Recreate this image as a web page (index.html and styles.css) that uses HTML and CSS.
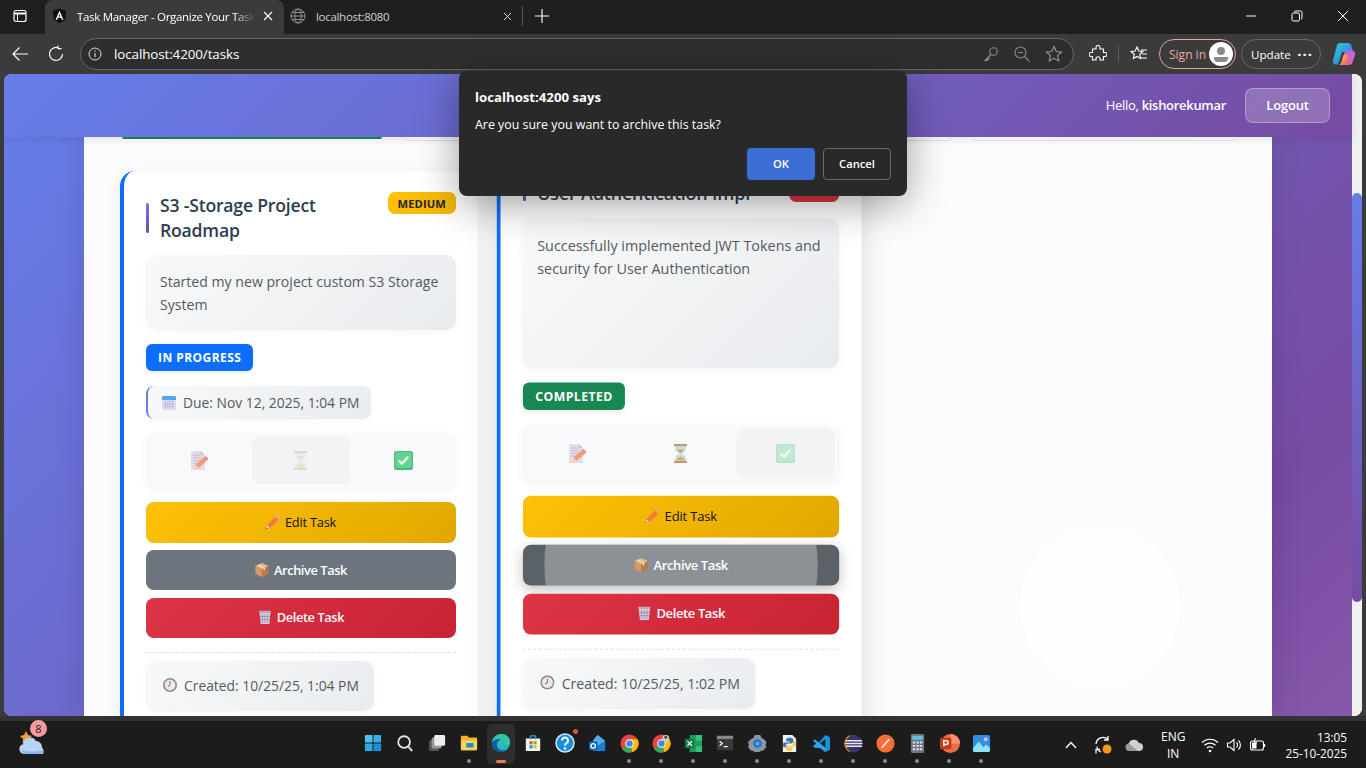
FILE: index.html
```html
<!DOCTYPE html>
<html lang="en">
<head>
<meta charset="utf-8">
<title>Task Manager - Organize Your Tasks</title>
<link rel="stylesheet" href="styles.css">
</head>
<body>
<svg class="defs" xmlns="http://www.w3.org/2000/svg">
  <defs>
    <symbol id="i-memo" viewBox="0 0 18 18">
      <path d="M2 0h9l4 4v14H2z" fill="#d9cfe3"/><path d="M11 0l4 4h-4z" fill="#b9adc8"/>
      <path d="M4 4h6M4 6.500h8M4 9h7M4 11.500h4" stroke="#a99bb8" stroke-width=".8"/>
      <path d="M5 17l1-4 8-7 3 3-8 7z" fill="#f4733d"/><path d="M14 6l1.500-1.300 3 3L17 9z" fill="#e8505b"/><path d="M5 17l1-4 3 3z" fill="#f8c9a0"/>
    </symbol>
    <symbol id="i-hour" viewBox="0 0 18 18">
      <path d="M4 2h10v3c0 2-3 3-3 4s3 2 3 4v3H4v-3c0-2 3-3 3-4s-3-2-3-4z" fill="#bfe3f5"/>
      <path d="M5.500 5h7c-.5 1.500-3 2.500-3.500 4-.5-1.500-3-2.500-3.500-4zM5 15c0-1.500 3-2.500 4-3.500 1 1 4 2 4 3.500z" fill="#eaa94a"/>
      <rect x="3" y="0" width="12" height="2.200" rx=".6" fill="#c99561"/><rect x="3" y="15.800" width="12" height="2.200" rx=".6" fill="#c99561"/>
    </symbol>
    <symbol id="i-check" viewBox="0 0 18 18">
      <rect x="0" y="0" width="18" height="18" rx="2" fill="#3eb56f"/><rect x="1" y="1" width="16" height="15" rx="1.500" fill="#55cf86"/>
      <path d="M4.500 9l3 3 6-6.500" fill="none" stroke="#fff" stroke-width="2"/>
    </symbol>
    <symbol id="i-cal" viewBox="0 0 14 14">
      <rect width="14" height="14" rx="1.500" fill="#e0d8ee"/><path d="M0 1.500A1.500 1.500 0 0 1 1.500 0h11A1.500 1.500 0 0 1 14 1.500V4H0z" fill="#4ea6ec"/>
      <path d="M2.500 6h9M2.500 8.300h9M2.500 10.600h9" stroke="#a8a0c8" stroke-width="1.200" stroke-dasharray="1.500 1"/>
    </symbol>
    <symbol id="i-pencil" viewBox="0 0 14 14">
      <path d="M0 14l1-4L9.500 1.500l3 3L4 13z" fill="#f5793f"/><path d="M9.500 1.500L11 0l3 3-1.500 1.500z" fill="#f0a0a8"/><path d="M0 14l1-4 3 3z" fill="#f8d2ac"/><path d="M0 14l.5-1.700 1.200 1.200z" fill="#444"/>
    </symbol>
    <symbol id="i-box" viewBox="0 0 14 14">
      <path d="M7 0l6.500 3v8L7 14 .5 11V3z" fill="#b5794a"/><path d="M.5 3L7 6v8L.5 11z" fill="#d49a66"/><path d="M7 0l6.500 3L7 6 .5 3z" fill="#e3b98e"/><path d="M3.500 1.500L10 4.500v2.500l-1.500.7V5.200L2 2.200z" fill="#f3dcc0"/>
    </symbol>
    <symbol id="i-trash" viewBox="0 0 14 14">
      <path d="M1.500 2.500h11l-1.200 11.500H2.700z" fill="#d5cfe0"/><rect x="1" y=".8" width="12" height="2" rx=".6" fill="#b6aec4"/>
      <path d="M4 4l.6 9M7 4v9M10 4l-.6 9M2.200 6.500h9.600M2.500 9.500h9" stroke="#8f86a4" stroke-width=".7" fill="none"/>
    </symbol>
    <symbol id="i-clock" viewBox="0 0 14 14">
      <circle cx="7" cy="7" r="7" fill="#8d8a90"/><circle cx="7" cy="7" r="5.400" fill="#ece9ee"/><path d="M7 7V3" stroke="#c0506a" stroke-width="1"/><path d="M7 7l-2 1.500" stroke="#666" stroke-width="1"/>
    </symbol>
  </defs>
</svg>

<div class="tabstrip">
  <button class="tb-btn side-toggle" aria-label="Tabs">
    <svg viewBox="0 0 16 16" width="16" height="16"><rect x="2" y="2.500" width="12" height="11" rx="2" fill="none" stroke="#fff" stroke-width="1.200"/><path d="M2.500 5.500h11" stroke="#fff" stroke-width="2"/><path d="M5.500 5v8" stroke="#fff" stroke-width="1"/></svg>
  </button>
  <div class="tab tab-active">
    <svg class="favicon" viewBox="0 0 16 16" width="15" height="16"><path d="M8 0L15 2.500l-1 9.500L8 16 2 12 1 2.500z" fill="#0f0f1a"/><path d="M8 2.500L3.800 12h1.600l.9-2.200h3.400l.9 2.200h1.600zM7 8.400l1-2.500 1 2.500z" fill="#fff"/></svg>
    <span class="tab-title">Task Manager - Organize Your Tasks</span>
    <svg class="tab-x" viewBox="0 0 10 10" width="10" height="10"><path d="M1 1l8 8M9 1l-8 8" stroke="#fff" stroke-width="1.100"/></svg>
  </div>
  <div class="tab tab-idle">
    <svg class="favicon" viewBox="0 0 16 16" width="16" height="16"><g fill="none" stroke="#8f8f8f" stroke-width="1"><circle cx="8" cy="8" r="7"/><ellipse cx="8" cy="8" rx="3.200" ry="7"/><path d="M1 8h14M2 4.500h12M2 11.500h12"/></g></svg>
    <span class="tab-title">localhost:8080</span>
    <svg class="tab-x" viewBox="0 0 10 10" width="9" height="9"><path d="M1 1l8 8M9 1l-8 8" stroke="#ddd" stroke-width="1.100"/></svg>
  </div>
  <span class="tab-sep"></span>
  <button class="tb-btn new-tab" aria-label="New tab">
    <svg viewBox="0 0 14 14" width="14" height="14"><path d="M7 0v14M0 7h14" stroke="#fff" stroke-width="1.100"/></svg>
  </button>
  <div class="win-controls">
    <svg viewBox="0 0 12 12" width="12" height="12"><path d="M1 6h10" stroke="#fff"/></svg>
    <svg viewBox="0 0 12 12" width="12" height="12"><rect x="1" y="3" width="7.500" height="8" rx="1.500" fill="none" stroke="#fff"/><path d="M3.500 2.500V2.200A1.200 1.200 0 0 1 4.700 1h4.800A1.500 1.500 0 0 1 11 2.500v5.300a1.200 1.200 0 0 1-1.200 1.200" fill="none" stroke="#fff"/></svg>
    <svg viewBox="0 0 12 12" width="12" height="12"><path d="M1 1l10 10M11 1L1 11" stroke="#fff"/></svg>
  </div>
</div>

<div class="toolbar">
  <button class="nav-btn" aria-label="Back"><svg viewBox="0 0 18 18" width="18" height="18"><path d="M17 9H2M8.500 2.500L2 9l6.500 6.500" fill="none" stroke="#fff" stroke-width="1.200"/></svg></button>
  <button class="nav-btn" aria-label="Refresh"><svg viewBox="0 0 18 18" width="18" height="18"><path d="M15.500 9A6.500 6.500 0 1 1 11.500 3M11 0.500v3.200h3.500" fill="none" stroke="#fff" stroke-width="1.200"/></svg></button>
  <div class="omnibox">
    <svg class="info" viewBox="0 0 14 14" width="14" height="14"><circle cx="7" cy="7" r="6" fill="none" stroke="#ddd"/><path d="M7 6v4.200M7 3.600v1.200" stroke="#ddd" stroke-width="1.100"/></svg>
    <span class="url">localhost:4200/tasks</span>
    <span class="omni-actions">
      <svg viewBox="0 0 16 16" width="16" height="16"><g fill="none" stroke="#8d8d8d" stroke-width="1.100"><circle cx="10.500" cy="5.500" r="3.800"/><path d="M8 8.500L2 14.500h2.500v-1.500h1.500v-1.500"/></g></svg>
      <svg viewBox="0 0 16 16" width="16" height="16"><g fill="none" stroke="#8d8d8d" stroke-width="1.100"><circle cx="6.500" cy="6.500" r="5.500"/><path d="M10.500 10.500l5 5M4 6.500h5"/></g></svg>
      <svg viewBox="0 0 18 18" width="18" height="18"><path d="M9 1.500l2.300 5 5.200.6-3.900 3.600 1.100 5.300L9 13.300 4.300 16l1.100-5.300L1.500 7.100l5.200-.6z" fill="none" stroke="#9a9a9a" stroke-width="1.100"/></svg>
    </span>
  </div>
  <div class="browser-actions">
    <svg class="ba-ext" viewBox="0 0 18 18" width="18" height="18"><path d="M7 2.500a2 2 0 0 1 4 0V4h3.500v3.500H16a2 2 0 0 1 0 4h-1.500V15H11v-1.200a2 2 0 0 0-4 0V15H3.500v-3.500H2a2 2 0 0 1 0-4h1.500V4H7z" fill="none" stroke="#fff" stroke-width="1.100"/></svg>
    <span class="ba-sep"></span>
    <svg class="ba-fav" viewBox="0 0 18 18" width="18" height="18"><path d="M7 2l1.800 4 4 .5-3 2.800.8 4.200L7 11.400l-3.600 2.100.8-4.200-3-2.800 4-.5zM11 5h6M12 9h5M11 13h6" fill="none" stroke="#fff" stroke-width="1.100"/></svg>
    <div class="signin">
      <span>Sign in</span>
      <span class="avatar"><svg viewBox="0 0 24 24" width="24" height="24"><circle cx="12" cy="12" r="12" fill="#fff"/><circle cx="12" cy="9" r="4" fill="#8a8a8a"/><path d="M5 15h14v1.500A4 4 0 0 1 15 20H9a4 4 0 0 1-4-3.500z" fill="#8a8a8a"/></svg></span>
    </div>
    <div class="update">
      <span>Update</span>
      <span class="dots">···</span>
    </div>
    <svg class="copilot" viewBox="0 0 24 24" width="24" height="24">
      <defs>
        <linearGradient id="cp1" x1="0" y1="0" x2="1" y2="1"><stop offset="0" stop-color="#30d0c8"/><stop offset=".6" stop-color="#2f8fe8"/><stop offset="1" stop-color="#3a5fd8"/></linearGradient>
        <linearGradient id="cp2" x1="0" y1="0" x2="1" y2="1"><stop offset="0" stop-color="#9a6cf0"/><stop offset="1" stop-color="#f060a8"/></linearGradient>
        <linearGradient id="cp3" x1="0" y1="0" x2="1" y2="1"><stop offset="0" stop-color="#f8d040"/><stop offset="1" stop-color="#f05a50"/></linearGradient>
      </defs>
      <path d="M8 1h8c2 0 3 1.200 3.500 3l1.500 6H10l-3 10c-.5 2-2 3-4 2.500C1 22 .5 20 1 18L4.500 5C5 2.500 6 1 8 1z" fill="url(#cp1)"/>
      <path d="M19 8.500h-6L10 19c-.5 2-1.500 3-3 4h10c2 0 3.500-1.500 4-4l2-6c.8-3-1-4.500-4-4.500z" fill="url(#cp2)"/>
      <path d="M11 13.500l4-1.500 1 5c.3 3-1.500 6-4.500 6H7c2-1 3-3 4-9.500z" fill="url(#cp3)"/>
    </svg>
  </div>
</div>

<div class="viewport">
  <div class="page">
    <header class="app-header">
      <span class="hello">Hello, <strong>kishorekumar</strong></span>
      <button class="logout">Logout</button>
    </header>
    <div class="page-body">
      <main class="panel">
        <div class="filters">
          <span class="filter filter-all"></span>
          <span class="filter filter-mid"></span>
          <span class="filter filter-end"></span>
        </div>
        <div class="grid">
          <article class="card">
            <div class="card-head">
              <h3 class="card-title">S3 -Storage Project Roadmap</h3>
              <span class="priority priority-medium">MEDIUM</span>
            </div>
            <p class="desc">Started my new project custom S3 Storage System</p>
            <span class="status status-progress">IN PROGRESS</span>
            <div class="due"><svg class="em"><use href="#i-cal"/></svg>Due: Nov 12, 2025, 1:04 PM</div>
            <div class="seg">
              <button class="seg-cell" aria-label="To do"><svg class="seg-ic op-mid"><use href="#i-memo"/></svg></button>
              <button class="seg-cell seg-on" aria-label="In progress"><svg class="seg-ic op-low"><use href="#i-hour"/></svg></button>
              <button class="seg-cell" aria-label="Completed"><svg class="seg-ic op-high"><use href="#i-check"/></svg></button>
            </div>
            <button class="btn btn-edit"><svg class="em"><use href="#i-pencil"/></svg>Edit Task</button>
            <button class="btn btn-archive"><svg class="em"><use href="#i-box"/></svg>Archive Task</button>
            <button class="btn btn-delete"><svg class="em"><use href="#i-trash"/></svg>Delete Task</button>
            <div class="card-foot"><div class="created"><svg class="em"><use href="#i-clock"/></svg>Created: 10/25/25, 1:04 PM</div></div>
          </article>

          <article class="card card-hover">
            <div class="card-head">
              <h3 class="card-title">User Authentication Impl</h3>
              <span class="priority priority-high">HIGH</span>
            </div>
            <p class="desc">Successfully implemented JWT Tokens and security for User Authentication</p>
            <span class="status status-done">COMPLETED</span>
            <div class="seg">
              <button class="seg-cell" aria-label="To do"><svg class="seg-ic op-mid"><use href="#i-memo"/></svg></button>
              <button class="seg-cell" aria-label="In progress"><svg class="seg-ic"><use href="#i-hour"/></svg></button>
              <button class="seg-cell seg-on" aria-label="Completed"><svg class="seg-ic op-low"><use href="#i-check"/></svg></button>
            </div>
            <button class="btn btn-edit"><svg class="em"><use href="#i-pencil"/></svg>Edit Task</button>
            <button class="btn btn-archive btn-active"><svg class="em"><use href="#i-box"/></svg>Archive Task</button>
            <button class="btn btn-delete"><svg class="em"><use href="#i-trash"/></svg>Delete Task</button>
            <div class="card-foot"><div class="created"><svg class="em"><use href="#i-clock"/></svg>Created: 10/25/25, 1:02 PM</div></div>
          </article>
        </div>
        <div class="ghost"></div>
      </main>
    </div>
  </div>
  <div class="scrolltrack"><div class="scrollthumb"></div></div>
</div>

<div class="dialog" role="dialog">
  <div class="dlg-title">localhost:4200 says</div>
  <div class="dlg-msg">Are you sure you want to archive this task?</div>
  <div class="dlg-actions">
    <button class="dlg-ok">OK</button>
    <button class="dlg-cancel">Cancel</button>
  </div>
</div>

<div class="gap-strip"></div>
<footer class="taskbar">
  <div class="weather">
    <svg viewBox="0 0 28 28" width="28" height="28">
      <path d="M8 3l2 4 4 1-3 3 .5 4-3.500-2-3.500 2 .5-4-3-3 4-1z" fill="#f0a030"/>
      <path d="M6 26a5 5 0 0 1-1-9.800A7 7 0 0 1 18 13a6 6 0 0 1 6 6.500 6 6 0 0 1 1 6.500z" fill="#b9d4f5"/>
      <path d="M4 22c5 2 14 2 21 0v1c0 2-1 3-3 3H7c-2 0-3-2-3-4z" fill="#8fb4e6"/>
    </svg>
    <span class="badge">8</span>
  </div>
  <div class="tb-center">
    <span class="tb-item"><svg viewBox="0 0 20 20" width="18" height="18"><g fill="#4cc2f1"><rect x="1" y="1" width="8.500" height="8.500" rx="1"/><rect x="10.500" y="1" width="8.500" height="8.500" rx="1" fill="#38b0ea"/><rect x="1" y="10.500" width="8.500" height="8.500" rx="1" fill="#2fa8e8"/><rect x="10.500" y="10.500" width="8.500" height="8.500" rx="1" fill="#1c8fd8"/></g></svg></span>
    <span class="tb-item"><svg viewBox="0 0 20 20" width="18" height="18"><circle cx="9" cy="9" r="6.500" fill="none" stroke="#e8e8e8" stroke-width="2"/><path d="M13.500 14l4.500 5" stroke="#c8c8c8" stroke-width="2.500"/></svg></span>
    <span class="tb-item"><svg viewBox="0 0 20 20" width="18" height="18"><rect x="1" y="7" width="11" height="12" rx="1.500" fill="#555"/><rect x="4" y="4" width="11" height="12" rx="1.500" fill="#999"/><rect x="7" y="1" width="12" height="12" rx="1.500" fill="#eee"/></svg></span>
    <span class="tb-item tb-run"><svg viewBox="0 0 20 20" width="18" height="18"><path d="M1 3a1 1 0 0 1 1-1h6l2 2h8a1 1 0 0 1 1 1v12a1 1 0 0 1-1 1H2a1 1 0 0 1-1-1z" fill="#f0b429"/><path d="M1 7h18v10a1 1 0 0 1-1 1H2a1 1 0 0 1-1-1z" fill="#fbd35a"/><rect x="7" y="10" width="8" height="5" fill="#1f8cd8"/></svg></span>
    <span class="tb-item tb-active"><svg viewBox="0 0 20 20" width="20" height="20"><defs><linearGradient id="ed1" x1="0" y1="0" x2="1" y2="1"><stop offset="0" stop-color="#4fd08a"/><stop offset="1" stop-color="#1aa6d8"/></linearGradient></defs><circle cx="10" cy="10" r="9" fill="url(#ed1)"/><path d="M1 10c0-5 5-9 10-9 4 0 8 3 8 8 0 2-2 3-4 3-1 0-2 0-2-1 1-1 1-2 0-3-3-3-9-2-11 2-1 2-1 5 1 8-1-2-2-5-2-8z" fill="#2ec8a8"/><path d="M1 10c0 5 4 9 9 9 2 0 4-1 5-2-5 1-9-1-9-5 0-3 2-5 5-5-4-2-10 0-10 3z" fill="#0c5ea8"/></svg></span>
    <span class="tb-item"><svg viewBox="0 0 20 20" width="18" height="18"><path d="M2 5h16v13a1 1 0 0 1-1 1H3a1 1 0 0 1-1-1z" fill="#f2f2f2"/><path d="M7 6V3a1 1 0 0 1 1-1h4a1 1 0 0 1 1 1v3" fill="none" stroke="#2aa5e0" stroke-width="1.300"/><rect x="6" y="8" width="3.500" height="3.500" fill="#f25022"/><rect x="10.500" y="8" width="3.500" height="3.500" fill="#7fba00"/><rect x="6" y="12.500" width="3.500" height="3.500" fill="#00a4ef"/><rect x="10.500" y="12.500" width="3.500" height="3.500" fill="#ffb900"/></svg></span>
    <span class="tb-item tb-help"><svg viewBox="0 0 20 20" width="20" height="20"><circle cx="10" cy="10" r="9" fill="#1a8fe0" stroke="#cfe9fb" stroke-width="1.500"/><path d="M7 7.500a3 3 0 1 1 4.500 2.600c-1 .6-1.500 1-1.500 2.400" fill="none" stroke="#fff" stroke-width="2"/><circle cx="10" cy="15.500" r="1.200" fill="#fff"/></svg></span>
    <span class="tb-item"><svg viewBox="0 0 20 20" width="19" height="19"><path d="M10 1l8 6v11H5V7z" fill="#1b7ed4"/><path d="M10 1l8 6-8 5-5-5z" fill="#50b0f2"/><rect x="1" y="8" width="9" height="9" rx="1.500" fill="#0f5fae"/><circle cx="5.500" cy="12.500" r="2.300" fill="none" stroke="#fff" stroke-width="1.400"/></svg></span>
    <span class="tb-item tb-run"><svg viewBox="0 0 20 20" width="19" height="19"><circle cx="10" cy="10" r="9.500" fill="#e8453c"/><path d="M10 10L2 15.500A9.500 9.500 0 0 0 13 19z" fill="#34a853"/><path d="M10 5.500h8.500A9.500 9.500 0 0 1 13 19z" fill="#fbbc05"/><circle cx="10" cy="10" r="4.500" fill="#fff"/><circle cx="10" cy="10" r="3.400" fill="#4285f4"/></svg></span>
    <span class="tb-item tb-run"><svg viewBox="0 0 20 20" width="19" height="19"><circle cx="10" cy="10" r="9.500" fill="#e8453c"/><path d="M10 10L2 15.500A9.500 9.500 0 0 0 13 19z" fill="#34a853"/><path d="M10 5.500h8.500A9.500 9.500 0 0 1 13 19z" fill="#fbbc05"/><circle cx="10" cy="10" r="4.500" fill="#fff"/><circle cx="10" cy="10" r="3.400" fill="#4285f4"/><circle cx="14.500" cy="4.500" r="3.500" fill="#d8c8b8"/><circle cx="14.500" cy="3.500" r="1.500" fill="#4a3a30"/></svg></span>
    <span class="tb-item tb-run"><svg viewBox="0 0 20 20" width="19" height="19"><path d="M6 1h12a1 1 0 0 1 1 1v16a1 1 0 0 1-1 1H6z" fill="#1f9d5b"/><path d="M12.500 1H19v6h-6.500zM12.500 13H19v6h-6.500z" fill="#37c07a"/><rect x="1" y="5" width="10" height="10" rx="1" fill="#107c41"/><path d="M3.500 7.500l5 5M8.500 7.500l-5 5" stroke="#fff" stroke-width="1.400"/></svg></span>
    <span class="tb-item tb-run"><svg viewBox="0 0 20 20" width="18" height="18"><rect x="1" y="2" width="18" height="16" rx="1" fill="#3a3a3a"/><rect x="1" y="2" width="18" height="3.500" fill="#8a8a8a"/><path d="M4 8l3 2.500L4 13" fill="none" stroke="#fff" stroke-width="1.300"/><path d="M8.500 14H13" stroke="#fff" stroke-width="1.300"/></svg></span>
    <span class="tb-item tb-run"><svg viewBox="0 0 20 20" width="19" height="19"><path d="M7 1h6l1 3 3 1.500 2.500 3-1 3 1 2-3 3.500-3 1-1.500 1H7l-1.500-1-3-1-2.500-3.500 1-2-1-3L3 5.500 6 4z" fill="#8c97a6"/><circle cx="10" cy="10" r="4.500" fill="#1f6fd0"/><circle cx="10" cy="10" r="2.200" fill="#5fa6ea"/></svg></span>
    <span class="tb-item tb-run"><svg viewBox="0 0 20 20" width="19" height="19"><path d="M3 1h10l4 4v14H3z" fill="#f0f0f0"/><path d="M9.500 4c-2 0-3 1-3 2v2h3.500v1H5c-1.500 0-2 1-2 2.500S3.500 14 5 14h1.500v-2c0-1.200 1-2 2-2h3.500c1 0 2-1 2-2V6c0-1-1-2-3-2z" fill="#3b7bb5"/><path d="M10 18c2 0 3-1 3-2v-2H9.500v-1H15c1.500 0 2-1 2-2.500S16.500 8 15 8h-1v2c0 1.200-1 2-2 2H8.500c-1 0-2 1-2 2v2c0 1 1.500 2 3.500 2z" fill="#f5c83c"/></svg></span>
    <span class="tb-item tb-run"><svg viewBox="0 0 20 20" width="19" height="19"><path d="M14 1l5 2.500v13L14 19 5.500 11 14 1z" fill="#1a8fdc"/><path d="M14 5.500L8.500 10l5.500 4.500z" fill="#1c1c1c"/><path d="M1 7l2-1.500L14 14.500 14 19 9 15 3 14.500 1 13 4.500 10z" fill="#2aa6ec"/></svg></span>
    <span class="tb-item tb-run"><svg viewBox="0 0 20 20" width="19" height="19"><circle cx="10" cy="10" r="9.500" fill="#3a3268"/><path d="M1 7h18M.6 10h18.800M1 13h18" stroke="#e9e6f5" stroke-width="1.600"/><path d="M6 1.500C2 4 1 7 1 10s1 6 5 8.500" fill="none" stroke="#f09028" stroke-width="1.200"/></svg></span>
    <span class="tb-item tb-run"><svg viewBox="0 0 20 20" width="19" height="19"><circle cx="10" cy="10" r="9.500" fill="#ff6c37"/><path d="M6 14.500L14 5.500" stroke="#fff" stroke-width="1.600"/></svg></span>
    <span class="tb-item tb-run"><svg viewBox="0 0 20 20" width="19" height="19"><rect x="3" y="0" width="14" height="20" rx="1.500" fill="#6d7680"/><rect x="4.500" y="2" width="11" height="4" fill="#60c0ea"/><path d="M5 9h2.500M8.800 9h2.500M12.500 9h2.500M5 12.500h2.500M8.800 12.500h2.500M12.500 12.500h2.500M5 16h2.500M8.800 16h2.500M12.500 16h2.500" stroke="#dfe3e8" stroke-width="2"/></svg></span>
    <span class="tb-item tb-run"><svg viewBox="0 0 22 22" width="21" height="21"><circle cx="12" cy="11" r="10" fill="#ed6c47"/><path d="M12 1a10 10 0 0 1 10 10H12z" fill="#ff8f6b"/><rect x="1" y="5" width="12" height="12" rx="1.500" fill="#c43e1c"/><path d="M5 14V8h2.500a2 2 0 0 1 0 4H5" fill="none" stroke="#fff" stroke-width="1.500"/></svg></span>
    <span class="tb-item tb-run"><svg viewBox="0 0 20 20" width="19" height="19"><rect x="1" y="1" width="18" height="18" rx="2" fill="#2f8fe0"/><path d="M1 15l6-7 5 6 3-3 4 4v2a2 2 0 0 1-2 2H3a2 2 0 0 1-2-2z" fill="#8fe2f5"/><circle cx="14.500" cy="5.500" r="2" fill="#f0b8d8"/></svg></span>
  </div>
  <div class="tray">
    <svg class="t-chev" viewBox="0 0 12 8" width="12" height="8"><path d="M1 7l5-5.500L11 7" fill="none" stroke="#fff" stroke-width="1.400"/></svg>
    <span class="t-sync"><svg viewBox="0 0 20 20" width="20" height="20"><path d="M3 9a7 7 0 0 1 12-4.500M15 1v4h-4M4 11.500a6.500 6.500 0 0 0 4 5.500M3 18.500v-4h4" fill="none" stroke="#fff" stroke-width="1.300"/><circle cx="14" cy="14" r="4.500" fill="#f59a12"/></svg></span>
    <svg class="t-cloud" viewBox="0 0 18 14" width="18" height="14"><path d="M4.500 13a3.800 3.800 0 0 1-.8-7.500A5.500 5.500 0 0 1 14 5a4 4 0 0 1 0 8z" fill="#cfcfcf"/><path d="M4.500 13a3.800 3.800 0 0 1-.8-7.500L13 13z" fill="#9a9a9a"/></svg>
    <div class="t-lang"><span>ENG</span><span>IN</span></div>
    <div class="t-sys">
      <svg viewBox="0 0 18 16" width="18" height="16"><g fill="none" stroke="#fff" stroke-width="1.200"><path d="M1 5.500a11.500 11.500 0 0 1 16 0M3.500 8.300a8 8 0 0 1 11 0M6 11a4.300 4.300 0 0 1 6 0"/></g><circle cx="9" cy="14" r="1.300" fill="#fff"/></svg>
      <svg viewBox="0 0 16 16" width="16" height="16"><path d="M1.500 6v4h2.500l4 3.500v-11L4 6z" fill="none" stroke="#fff" stroke-width="1.100"/><path d="M10.500 5.500a3.500 3.500 0 0 1 0 5M12.500 3.500a6.300 6.300 0 0 1 0 9" fill="none" stroke="#fff" stroke-width="1.100"/></svg>
      <svg viewBox="0 0 18 16" width="18" height="16"><rect x="1.500" y="4" width="13" height="9" rx="2" fill="none" stroke="#fff" stroke-width="1.100"/><rect x="3" y="5.500" width="4.500" height="6" fill="#fff"/><path d="M15.500 7v3" stroke="#fff" stroke-width="1.400"/><path d="M6.500 1L5 5h2.500L6 9" fill="none" stroke="#fff" stroke-width="1"/></svg>
    </div>
    <div class="t-clock"><span>13:05</span><span>25-10-2025</span></div>
  </div>
</footer>
</body>
</html>
```

FILE: styles.css
```css
* { box-sizing: border-box; }
html, body { margin: 0; padding: 0; }
body {
  width: 1366px;
  height: 768px;
  overflow: hidden;
  position: relative;
  display: flex;
  flex-direction: column;
  background: #3b3b3b;
  font-family: "Open Sans", "Noto Sans", sans-serif;
  color: #fff;
}
button { font-family: inherit; border: 0; background: none; padding: 0; color: inherit; }
.defs { display: block; width: 0; height: 0; flex: none; }

/* tab strip */
.tabstrip { height: 34px; flex: none; background: #1f1f1f; display: flex; align-items: center; font-size: 11.5px; }
.tb-btn { display: flex; align-items: center; justify-content: center; padding-bottom: 2px; }
.side-toggle { width: 45px; height: 34px; padding-right: 5px; }
.tab { height: 34px; display: flex; align-items: center; }
.tab-active { width: 239px; background: #3b3b3b; border-radius: 8px 8px 0 0; padding: 0 11px 2px 7px; }
.tab-idle { width: 233px; padding: 0 5px 2px 6px; color: #cfcfcf; }
.tab .favicon { flex: none; }
.tab-title { flex: 1; white-space: nowrap; overflow: hidden; margin-left: 10px; letter-spacing: -.3px; }
.tab-active .tab-title { -webkit-mask-image: linear-gradient(90deg, #000 88%, transparent 100%); mask-image: linear-gradient(90deg, #000 88%, transparent 100%); }
.tab-x { flex: none; margin-left: 8px; }
.tab-sep { width: 1px; height: 20px; background: #555; margin: 0 0 2px 5px; }
.new-tab { width: 37px; height: 34px; }
.win-controls { margin-left: auto; display: flex; align-items: center; gap: 34px; padding: 0 17px 2px 0; }

/* toolbar */
.toolbar { height: 40px; flex: none; background: #3b3b3b; display: flex; align-items: center; padding-left: 2px; }
.nav-btn { width: 36px; height: 32px; display: flex; align-items: center; justify-content: center; flex: none; }
.omnibox { width: 994px; height: 32px; margin-left: 6px; border: 1px solid #666; border-radius: 16px; background: #2e2e2e; display: flex; align-items: center; padding: 0 10px 0 7px; }
.url { margin-left: 12px; font-size: 13.4px; font-weight: 500; color: #fff; letter-spacing: -.1px; }
.omni-actions { margin-left: auto; display: flex; align-items: center; gap: 15px; }
.browser-actions { display: flex; align-items: center; flex: 1; padding-left: 15px; }
.ba-sep { width: 1px; height: 16px; background: #5a5a5a; margin: 0 11px; }
.signin { width: 77px; height: 30px; margin-left: 11px; border: 1px solid #e8a49c; border-radius: 15px; display: flex; align-items: center; justify-content: space-between; padding: 0 2px 0 9px; font-size: 12px; color: #f0a8a2; }
.avatar { display: flex; }
.update { width: 80px; height: 30px; margin-left: 5px; border: 1px solid #686868; border-radius: 15px; display: flex; align-items: center; justify-content: space-between; padding: 0 7px 0 9px; font-size: 11.6px; color: #fff; }
.dots { font-size: 15px; font-weight: 700; letter-spacing: 1px; line-height: 1; }
.copilot { margin-left: 11px; }

/* page viewport */
.viewport { height: 642px; flex: none; margin: 0 4px; display: flex; overflow: hidden; border-radius: 8px; background: #f1f1f1; }
.page { flex: 1; min-width: 0; display: flex; flex-direction: column; background: linear-gradient(135deg, #667eea 0%, #764ba2 85%, #8658ab 100%); }
.app-header { height: 63px; flex: none; position: relative; z-index: 3; background: linear-gradient(135deg, #667eea 0%, #764ba2 100%); box-shadow: 0 2px 10px rgba(0,0,0,.1); display: flex; align-items: center; justify-content: flex-end; padding: 0 22px 1px 0; }
.hello { font-size: 13px; color: #fff; letter-spacing: -.3px; }
.hello strong { font-weight: 600; }
.logout { width: 85px; height: 35px; margin-left: 19px; background: rgba(255,255,255,.2); border: 1px solid rgba(255,255,255,.3); border-radius: 8px; font-size: 13px; font-weight: 600; color: #fff; letter-spacing: -.2px; }
.page-body { flex: 1; min-height: 0; padding: 0 80px; display: flex; }
.panel { flex: 1; position: relative; background: #fcfcfe; box-shadow: 0 0 30px rgba(0,0,0,.12); padding: 0 0 0 36px; }
.filters { height: 4px; display: flex; align-items: flex-start; }
.filter { display: block; }
.filter-all { width: 260px; height: 2px; margin-left: 2px; background: #198754; border-radius: 0 0 10px 10px; }
.filter-mid { width: 548px; height: 4px; margin-left: 22px; background: #fff; border: 1px solid #e6e8eb; border-top: 0; border-radius: 0 0 8px 8px; }
.filter-end { width: 264px; height: 4px; margin-left: 20px; background: #fff; border: 1px solid #e6e8eb; border-top: 0; border-radius: 0 0 8px 8px; }
.grid { display: grid; grid-template-columns: 358px 358px; column-gap: 21.5px; margin-top: 30px; }
.ghost { position: absolute; left: 936px; top: 390px; width: 160px; height: 160px; border-radius: 50%; background: #fff; opacity: .5; }

/* card */
.card { position: relative; background: #fff; border-left: 4px solid #0d6efd; border-radius: 15px 0 0 0; box-shadow: 0 4px 20px rgba(0,0,0,.06); padding: 22px 22px 22px; display: flex; flex-direction: column; align-items: flex-start; height: 562px; color: #2c3e50; }
.card-hover { transform: translateY(-7.2px) scale(1.02); box-shadow: 0 8px 30px rgba(0,0,0,.14); z-index: 1; }
.card-head { width: 100%; display: flex; justify-content: space-between; align-items: flex-start; gap: 12px; margin-bottom: 12px; }
.card-title { position: relative; margin: 0; padding-left: 14px; font-size: 17.6px; line-height: 25px; font-weight: 600; color: #2c3e50; flex: 1; letter-spacing: -.2px; }
.card-title::before { content: ""; position: absolute; left: 0; top: 20%; height: 60%; width: 3px; border-radius: 2px; background: linear-gradient(180deg, #667eea, #764ba2); }
.priority { flex: none; height: 22px; display: flex; align-items: center; padding: 0 10px; border-radius: 7px; font-size: 11.2px; font-weight: 700; letter-spacing: .1px; margin-top: -1px; }
.priority-medium { background: linear-gradient(135deg, #ffc107, #f2b705); color: #212529; }
.priority-high { background: #dc3545; color: #fff; width: 49px; }
.desc { width: 100%; margin: 0 0 14px; padding: 15px 14px 13px; border-radius: 10px; background: linear-gradient(135deg, #f8f9fa, #e9ecef); box-shadow: 0 2px 8px rgba(0,0,0,.03); font-size: 14.1px; line-height: 23px; color: #555a60; flex: 1; }
.status { height: 27px; display: inline-flex; align-items: center; padding: 0 12px; border-radius: 6px; font-size: 12px; font-weight: 700; letter-spacing: .45px; color: #fff; box-shadow: 0 2px 5px rgba(0,0,0,.08); margin-bottom: 15px; }
.status-progress { background: #0d6efd; }
.status-done { background: #198754; }
.due { height: 33px; display: flex; align-items: center; padding: 0 12px 0 14px; border-left: 2px solid #667eea; border-radius: 8px; background: linear-gradient(135deg, #f8f9fa, #e9ecef); font-size: 13.85px; color: #555a60; margin-bottom: 14px; box-shadow: 0 2px 6px rgba(0,0,0,.03); }
.em { width: 14px; height: 14px; flex: none; margin-right: 7px; }
.seg { width: 100%; height: 55px; padding: 4px; display: flex; gap: 5px; background: #f8f9fa; border-radius: 10px; box-shadow: 0 2px 8px rgba(0,0,0,.05); margin-bottom: 14px; flex: none; }
.seg-cell { flex: 1; display: flex; align-items: center; justify-content: center; border-radius: 8px; }
.seg-on { background: #f1f3f5; }
.seg-ic { width: 19px; height: 19px; }
.op-low { opacity: .3; }
.op-mid { opacity: .7; }
.op-high { opacity: .92; }
.btn { position: relative; overflow: hidden; width: 100%; height: 41px; flex: none; display: flex; align-items: center; justify-content: center; border-radius: 8px; font-size: 12.8px; font-weight: 600; letter-spacing: -.4px; margin-bottom: 7px; color: #fff; }
.btn .em { margin-right: 5px; position: relative; }
.btn-edit { background: linear-gradient(135deg, #ffc107, #e0a800); color: #111; font-weight: 500; letter-spacing: -.2px; padding-bottom: 2px; }
.btn-archive { background: #6c757d; height: 40px; margin-bottom: 8px; }
.btn-delete { background: linear-gradient(135deg, #dc3545, #c82333); height: 40px; margin-bottom: 14px; padding-bottom: 2px; }
.btn-active { background: #5a6268; box-shadow: 0 4px 14px rgba(0,0,0,.25); }
.btn-active::before { content: ""; position: absolute; left: 50%; top: 50%; width: 268px; height: 268px; border-radius: 50%; transform: translate(-50%, -50%); background: rgba(255,255,255,.3); }
.card-foot { width: 100%; border-top: 1px dashed #dfe2e6; padding-top: 8px; flex: none; }
.created { display: inline-flex; align-items: center; height: 50px; padding: 0 15px 2px 17px; border-radius: 10px; background: linear-gradient(135deg, #f8f9fa, #e9ecef); font-size: 13.85px; color: #555a60; box-shadow: 0 2px 8px rgba(0,0,0,.03); }

/* scrollbar */
.scrolltrack { width: 10px; flex: none; background: #f1f1f1; padding-top: 119px; }
.scrollthumb { height: 409px; border-radius: 5px; background: linear-gradient(180deg, #667eea, #764ba2); }

/* native confirm dialog */
.dialog { position: absolute; left: 459px; top: 71px; width: 448px; height: 125px; z-index: 10; background: #292929; border-radius: 8px; box-shadow: 0 8px 40px rgba(0,0,0,.38); padding: 17px 16px 0; font-size: 12.4px; color: #fff; }
.dlg-title { font-weight: 700; line-height: 18px; font-size: 13.2px; }
.dlg-msg { margin-top: 10px; line-height: 18px; }
.dlg-actions { display: flex; justify-content: flex-end; gap: 8px; margin-top: 14px; }
.dlg-ok, .dlg-cancel { width: 68px; height: 32px; border-radius: 4px; font-size: 11.2px; font-weight: 600; color: #fff; padding-bottom: 2px; }
.dlg-ok { background: #3a6ed4; }
.dlg-cancel { background: transparent; border: 1px solid #6b6b6b; }

/* taskbar */
.gap-strip { height: 5px; flex: none; background: #333; }
.taskbar { flex: 1; background: #1c1c1c; display: flex; align-items: center; padding-left: 18px; position: relative; }
.weather { position: relative; width: 28px; height: 28px; flex: none; margin-top: -6px; }
.badge { position: absolute; left: 12px; top: -8px; width: 17px; height: 17px; border-radius: 50%; background: #f79aa0; color: #222; font-size: 11px; display: flex; align-items: center; justify-content: center; }
.tb-center { display: flex; margin-left: 311px; height: 47px; }
.tb-item { position: relative; width: 32px; height: 47px; display: flex; align-items: center; justify-content: center; padding-bottom: 3px; }
.tb-active { background: #2e2e2e; border-radius: 5px; height: 40px; margin-top: 3px; width: 28px; margin-left: 2px; margin-right: 2px; padding-bottom: 3px; }
.tb-active::after { content: ""; position: absolute; left: 9px; bottom: 1px; width: 10px; height: 3px; border-radius: 2px; background: #f0785a; }
.tb-run::after { content: ""; position: absolute; left: 14px; bottom: 5px; width: 4px; height: 4px; border-radius: 50%; background: #8a8a8a; }
.tb-help::after { content: ""; position: absolute; right: 3px; top: 8px; width: 5px; height: 5px; border-radius: 50%; background: #d8553a; }
.tray { margin-left: auto; display: flex; align-items: center; height: 47px; font-size: 12px; color: #fff; padding-right: 19px; }
.t-chev { margin-right: 16px; }
.t-sync { display: flex; margin-right: 12px; }
.t-cloud { margin-right: 18px; }
.t-lang { display: flex; flex-direction: column; align-items: center; line-height: 17px; margin-right: 16px; }
.t-sys { display: flex; align-items: center; gap: 7px; margin-right: 18px; }
.t-clock { display: flex; flex-direction: column; align-items: flex-end; line-height: 16px; font-size: 11.8px; }
```
